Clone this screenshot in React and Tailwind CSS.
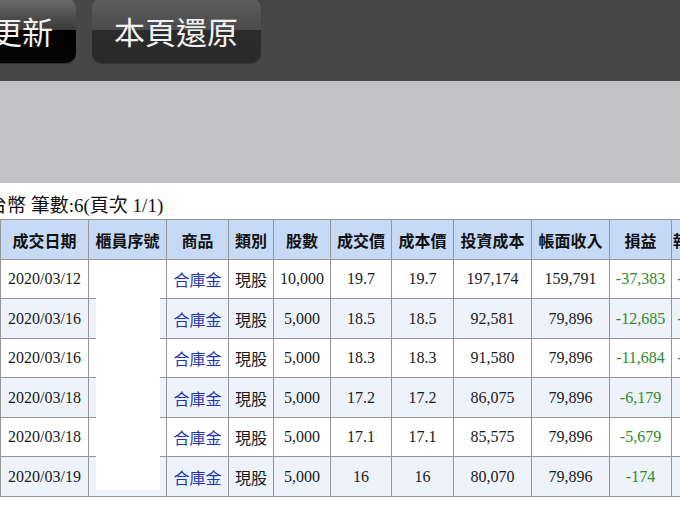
import React from "react";

const cols = [
  { h: "成交日期", w: "w-[89px] border-l" },
  { h: "櫃員序號", w: "w-[78px]" },
  { h: "商品", w: "w-[62px]" },
  { h: "類別", w: "w-[45px]" },
  { h: "股數", w: "w-[57px]" },
  { h: "成交價", w: "w-[61px]" },
  { h: "成本價", w: "w-[62px]" },
  { h: "投資成本", w: "w-[78px]" },
  { h: "帳面收入", w: "w-[78px]" },
  { h: "損益", w: "w-[62px]" },
  { h: "報酬率%", w: "w-[66px]" },
];

const rows = [
  ["2020/03/12", "10,000", "19.7", "19.7", "197,174", "159,791", "-37,383", "-18.96%"],
  ["2020/03/16", "5,000", "18.5", "18.5", "92,581", "79,896", "-12,685", "-13.70%"],
  ["2020/03/16", "5,000", "18.3", "18.3", "91,580", "79,896", "-11,684", "-12.76%"],
  ["2020/03/18", "5,000", "17.2", "17.2", "86,075", "79,896", "-6,179", "-7.18%"],
  ["2020/03/18", "5,000", "17.1", "17.1", "85,575", "79,896", "-5,679", "-6.64%"],
  ["2020/03/19", "5,000", "16", "16", "80,070", "79,896", "-174", "-0.22%"],
];

const serif = "font-['Liberation_Serif','Noto_Sans_CJK_TC',serif]";
const sans = "font-['Noto_Sans_CJK_TC','Liberation_Sans',sans-serif]";
const cell = "border-r border-b border-[#959595] text-center align-middle p-0";

export default function App() {
  return (
    <div className="w-[680px] h-[523px] overflow-hidden bg-white">
      <div className="h-[81px] bg-[#474747] flex items-start gap-[16px] overflow-hidden">
        <button
          className={`-ml-[31px] -mt-[2px] h-[65px] pl-[22px] pr-[23px] rounded-[10px] text-[31px] leading-none text-[#f2f2f2] bg-[linear-gradient(to_bottom,#6e6e6e_0%,#4c4c4c_30%,#3b3b3b_49%,#000000_49%,#060606_100%)] shadow-[0_1px_1px_rgba(0,0,0,0.35)] ${sans}`}
        >
          更新
        </button>
        <button
          className={`-mt-[2px] h-[65px] pl-[22px] pr-[23px] rounded-[10px] text-[31px] leading-none text-[#f2f2f2] bg-[linear-gradient(to_bottom,#5f5f5f_0%,#525252_30%,#4c4c4c_49%,#2b2b2b_49%,#2a2a2a_100%)] shadow-[0_1px_1px_rgba(0,0,0,0.3)] ${sans}`}
        >
          本頁還原
        </button>
      </div>
      <div className="h-[102px] bg-[#c2c1c6]" />
      <div className="pt-[11px]">
        <div className={`-ml-[12px] text-[19px] leading-[23px] text-[#111] whitespace-nowrap ${serif}`}>
          台幣 筆數:6(頁次 1/1)
        </div>
        <div className="relative mt-[2px]">
          <table className="table-fixed w-[738px] border-separate border-spacing-0">
            <thead>
              <tr>
                {cols.map((c, i) => (
                  <th
                    key={i}
                    className={`${cell} ${c.w} border-t h-[41px] bg-[#c6daf6] text-[16px] font-bold text-[#111] whitespace-nowrap ${sans}`}
                  >
                    {c.h}
                  </th>
                ))}
              </tr>
            </thead>
            <tbody>
              {rows.map((r, i) => {
                const bg = i % 2 === 1 ? "bg-[#eef3fb]" : "bg-white";
                const h = i % 2 === 1 ? "h-[40px]" : "h-[39px]";
                return (
                  <tr key={i} className={`${bg} ${h}`}>
                    <td className={`${cell} border-l text-[16px] text-[#1a1a1a] ${serif}`}>{r[0]}</td>
                    <td className={`${cell}`}></td>
                    <td className={`${cell} text-[16px] text-[#1f35b3] ${sans}`}>合庫金</td>
                    <td className={`${cell} text-[16px] text-[#1a1a1a] ${sans}`}>現股</td>
                    <td className={`${cell} text-[16px] text-[#1a1a1a] ${serif}`}>{r[1]}</td>
                    <td className={`${cell} text-[16px] text-[#1a1a1a] ${serif}`}>{r[2]}</td>
                    <td className={`${cell} text-[16px] text-[#1a1a1a] ${serif}`}>{r[3]}</td>
                    <td className={`${cell} text-[16px] text-[#1a1a1a] ${serif}`}>{r[4]}</td>
                    <td className={`${cell} text-[16px] text-[#1a1a1a] ${serif}`}>{r[5]}</td>
                    <td className={`${cell} text-[16px] text-[#2d8a2d] ${serif}`}>{r[6]}</td>
                    <td className={`${cell} text-[16px] text-[#2d8a2d] whitespace-nowrap ${serif}`}>{r[7]}</td>
                  </tr>
                );
              })}
            </tbody>
          </table>
          <div className="absolute left-[96px] top-[43px] w-[64px] h-[228px] bg-white" />
        </div>
      </div>
    </div>
  );
}
